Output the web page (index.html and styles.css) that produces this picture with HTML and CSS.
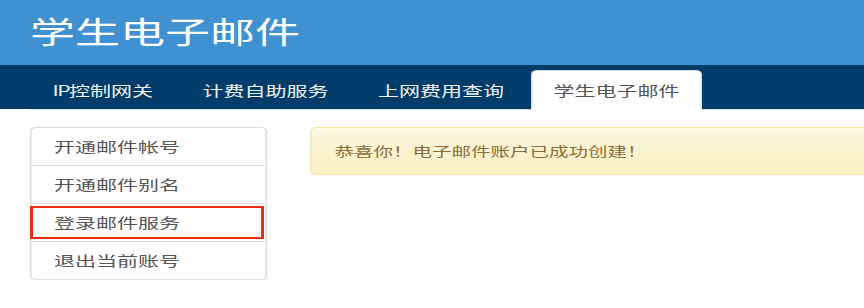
FILE: index.html
```html
<!DOCTYPE html>
<html lang="zh-CN">
<head>
<meta charset="utf-8">
<title>学生电子邮件</title>
<link rel="stylesheet" href="styles.css">
</head>
<body>
<div class="page">
  <header class="masthead">
    <div class="container">
      <h1 class="brand">学生电子邮件</h1>
    </div>
  </header>
  <nav class="navbar">
    <div class="container">
      <ul class="tabs">
        <li class="tab"><a href="#"><span class="latin">IP</span>控制网关</a></li>
        <li class="tab"><a href="#">计费自助服务</a></li>
        <li class="tab"><a href="#">上网费用查询</a></li>
        <li class="tab active"><a href="#">学生电子邮件</a></li>
      </ul>
    </div>
  </nav>
  <main class="container content">
    <ul class="list-group">
      <li class="list-item"><a href="#">开通邮件帐号</a></li>
      <li class="list-item"><a href="#">开通邮件别名</a></li>
      <li class="list-item marked"><a href="#">登录邮件服务</a><span class="highlight"></span></li>
      <li class="list-item"><a href="#">退出当前账号</a></li>
    </ul>
    <div class="alert">恭喜你！电子邮件账户已成功创建！</div>
  </main>
</div>
</body>
</html>
```

FILE: styles.css
```css
* { box-sizing: border-box; }

html, body {
  margin: 0;
  padding: 0;
  background: #fff;
  overflow: hidden;
}

body {
  font-family: "Noto Sans CJK SC", "Liberation Sans", sans-serif;
  font-size: 14px;
  color: #555;
}

.page {
  width: 576px;
  transform: scaleX(1.5);
  transform-origin: 0 0;
}

.container {
  padding: 0 20px;
}

a { text-decoration: none; color: inherit; }

.masthead {
  background: #3f91d2;
  height: 65px;
  padding-top: 14px;
}

.brand {
  margin: 0;
  font-size: 30px;
  line-height: 33px;
  font-weight: 400;
  color: #fff;
}

.navbar {
  background: #023c6a;
  height: 44px;
  padding-top: 5px;
}

.tabs {
  list-style: none;
  margin: 0;
  padding: 0;
  display: flex;
  border-bottom: 1px solid #e4e4e4;
  width: 1000px;
}

.tab {
  margin-right: 3px;
  margin-bottom: -1px;
}

.tab a {
  display: block;
  padding: 10px 14px;
  line-height: 18px;
  font-size: 14px;
  color: #f0f0f0;
  border: 1px solid transparent;
  border-radius: 4px 4px 0 0;
}

.latin { letter-spacing: -1px; }

.tab.active a {
  background: #fff;
  color: #555;
  border-color: #ddd #ddd transparent;
}

.content {
  display: grid;
  grid-template-columns: 158px 531px;
  column-gap: 29px;
  align-items: start;
  padding-top: 18px;
}

.list-group {
  list-style: none;
  margin: 0;
  padding: 0;
  border: 1px solid #ddd;
  border-radius: 4px;
  box-shadow: 0 1px 2px rgba(0,0,0,0.05);
}

.list-item {
  position: relative;
  padding: 10px 15px;
  line-height: 17px;
  font-size: 14px;
  color: #555;
  border-top: 1px solid #ddd;
}

.list-item:first-child { border-top: 0; }

.highlight {
  position: absolute;
  left: -1px;
  right: 1px;
  top: 2px;
  height: 33px;
  border: 2px solid #f42a0e;
  pointer-events: none;
}

.alert {
  padding: 14px 15px;
  line-height: 18px;
  font-size: 13px;
  color: #8a6d3b;
  background: linear-gradient(to bottom, #fcf8e3 0%, #f8efc0 100%);
  border: 1px solid #f5e79e;
  border-radius: 4px;
  box-shadow: inset 0 1px 0 rgba(255,255,255,0.25), 0 1px 2px rgba(0,0,0,0.05);
}
```
